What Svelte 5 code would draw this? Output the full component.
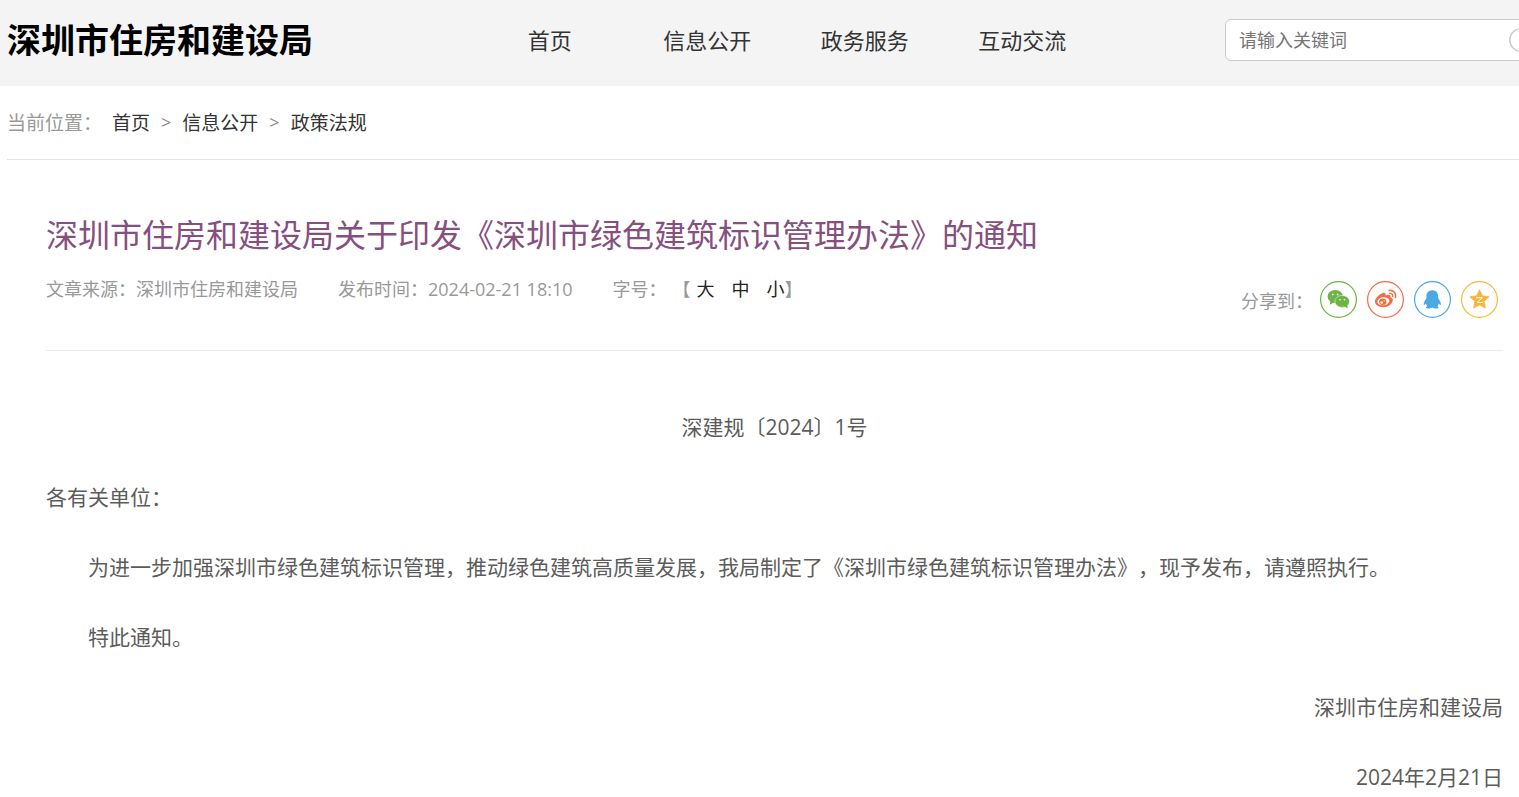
<script>
  const navItems = ['首页', '信息公开', '政务服务', '互动交流'];
  const crumbs = ['首页', '信息公开', '政策法规'];
  const sizes = ['大', '中', '小'];

  let keyword = $state('');
</script>

<div class="page">
  <header class="header">
    <a class="logo" href="#home">深圳市住房和建设局</a>

    <nav class="nav">
      {#each navItems as item}
        <a href="#nav">{item}</a>
      {/each}
    </nav>

    <form class="search" onsubmit={(e) => e.preventDefault()}>
      <input type="text" aria-label="请输入关键词" placeholder="请输入关键词" bind:value={keyword} />
      <button type="submit" aria-label="搜索">
        <svg width="30" height="30" viewBox="0 0 30 30" fill="none" stroke="#ccc" stroke-width="1.5">
          <circle cx="13" cy="15" r="11.2" />
          <path d="M21 23l6 6" />
        </svg>
      </button>
    </form>
  </header>

  <div class="crumbs">
    <span class="label">当前位置：</span>
    {#each crumbs as crumb, i}
      {#if i > 0}<span class="sep">&gt;</span>{/if}
      <a href="#crumb">{crumb}</a>
    {/each}
  </div>

  <main class="article">
    <h1>深圳市住房和建设局关于印发《深圳市绿色建筑标识管理办法》的通知</h1>

    <div class="info">
      <div class="meta">
        <span>文章来源：深圳市住房和建设局</span>
        <span>发布时间：2024-02-21 18:10</span>
        <span class="font-size">
          <span>字号：</span>
          <span class="sizes">
            <span>【</span>
            {#each sizes as size}
              <button type="button">{size}</button>
            {/each}
            <span>】</span>
          </span>
        </span>
      </div>

      <div class="share">
        <span>分享到：</span>
        <!-- wechat -->
        <a href="#wechat" aria-label="微信">
          <svg viewBox="0 0 37 37">
            <circle class="ring" cx="18.5" cy="18.5" r="17.9" stroke="#6cb544" />
            <g fill="#6cb544">
              <ellipse cx="15.2" cy="15.4" rx="7.6" ry="6.5" />
              <path d="M10.5 19.5l-.8 4.3 4.5-2.2z" />
            </g>
            <ellipse cx="22.2" cy="20.4" rx="7.3" ry="6" fill="#6cb544" stroke="#fff" stroke-width=".5" />
            <path d="M23.8 25l3.9 2.5-.6-4.2z" fill="#6cb544" />
            <g fill="#fff">
              <circle cx="12.8" cy="13.4" r=".9" />
              <circle cx="17.6" cy="13.4" r=".9" />
              <circle cx="20" cy="18.7" r=".8" />
              <circle cx="24.4" cy="18.7" r=".8" />
            </g>
          </svg>
        </a>
        <!-- weibo -->
        <a href="#weibo" aria-label="微博">
          <svg viewBox="0 0 37 37">
            <circle class="ring" cx="18.5" cy="18.5" r="17.9" stroke="#f56b45" />
            <path
              d="M15.8 12c1.8-.7 3.3 0 2.8 2.4 2.6-1.1 5.6-1 4.9 1.9 1.7.5 2.5 1.6 2.3 3.2-.4 3.7-4.8 6.7-9.6 6.7-4.7 0-8.2-2.4-8.2-5.7 0-3 3.8-7 7.8-8.5z"
              fill="#f56b45"
            />
            <ellipse cx="16.4" cy="20.3" rx="6" ry="4" fill="#fff" transform="rotate(-8 16.4 20.3)" />
            <ellipse cx="15.8" cy="20.7" rx="3.7" ry="3.3" fill="#f56b45" />
            <circle cx="14.7" cy="21.5" r="1.3" fill="#fff" />
            <circle cx="17.2" cy="19.8" r=".6" fill="#fff" />
            <g fill="none" stroke="#f56b45" stroke-linecap="round">
              <path d="M22.2 9.5c4-.7 7.3 2.6 6.3 6.7" stroke-width="1.6" />
              <path d="M22.6 12.4c2-.3 3.6 1.3 3.1 3.2" stroke-width="1.3" />
            </g>
          </svg>
        </a>
        <!-- qq -->
        <a href="#qq" aria-label="QQ">
          <svg viewBox="0 0 37 37">
            <circle class="ring" cx="18.5" cy="18.5" r="17.9" stroke="#4aa9e3" />
            <path
              d="M18.3 9.2c-3.8 0-5.9 2.8-5.9 6.2v1.8c-1.4 2-2.8 4.4-2.7 6.2.1 1.2 1.2.6 2.1-.8.3 1.1.8 1.9 1.5 2.6-1.9.8-1.6 2.3.8 2.3 1.8 0 3.2-.3 4.2-1 1 .7 2.4 1 4.2 1 2.4 0 2.7-1.5.8-2.3.7-.7 1.2-1.5 1.5-2.6.9 1.4 2 2 2.1.8.1-1.8-1.3-4.2-2.7-6.2v-1.8c0-3.4-2.1-6.2-5.9-6.2z"
              fill="#4aa9e3"
            />
          </svg>
        </a>
        <!-- qzone -->
        <a href="#qzone" aria-label="QQ空间">
          <svg viewBox="0 0 37 37">
            <circle class="ring" cx="18.5" cy="18.5" r="17.9" stroke="#f6b93b" />
            <path
              d="M18.5 8.7l2.9 6.1 6.7.9-4.9 4.7 1.2 6.7-5.9-3.2-5.9 3.2 1.2-6.7-4.9-4.7 6.7-.9z"
              fill="#f8b53c"
              stroke="#f8b53c"
              stroke-width=".7"
              stroke-linejoin="round"
            />
            <path d="M15 16.7h6.4l-5 4.5c2 .5 4 .4 6-.1" fill="none" stroke="#fff" stroke-width="1" />
          </svg>
        </a>
      </div>
    </div>

    <div class="content">
      <p class="center">深建规〔2024〕1号</p>
      <p>各有关单位：</p>
      <p class="indent">为进一步加强深圳市绿色建筑标识管理，推动绿色建筑高质量发展，我局制定了《深圳市绿色建筑标识管理办法》，现予发布，请遵照执行。</p>
      <p class="indent">特此通知。</p>
      <p class="right">深圳市住房和建设局</p>
      <p class="right">2024年2月21日</p>
    </div>
  </main>
</div>

<style>
  :global(body) {
    margin: 0;
    background: #fff;
  }
  .page {
    overflow: hidden;
    font-family: 'Open Sans', 'Noto Sans CJK SC', sans-serif;
    font-size: 18px;
    color: #333;
    /* keep full-width punctuation at its full width */
    text-spacing-trim: space-all;
  }
  a {
    color: inherit;
    text-decoration: none;
  }
  button,
  input {
    padding: 0;
    border: none;
    background: none;
    font: inherit;
    color: inherit;
  }
  button {
    cursor: pointer;
  }

  /* header */
  .header {
    display: grid;
    grid-template-columns: 464px 630px 1fr;
    align-items: center;
    height: 86px;
    box-sizing: border-box;
    padding: 0 0 6px 7px;
    background: #f4f4f4;
  }
  .logo {
    font-size: 34px;
    line-height: 48px;
    font-weight: bold;
    color: #000;
  }
  .nav {
    display: grid;
    grid-template-columns: repeat(4, 1fr);
    font-size: 22px;
    line-height: 32px;
    text-align: center;
  }
  /* the search box runs past the right edge of the window */
  .search {
    display: flex;
    align-items: center;
    justify-self: end;
    width: 314px;
    height: 42px;
    margin-right: -20px;
    box-sizing: border-box;
    border: 1px solid #ccc;
    border-radius: 6px;
    background: #fff;
  }
  .search input {
    flex: 1;
    min-width: 0;
    height: 40px;
    padding-left: 13px;
    outline: none;
  }
  .search input::placeholder {
    color: #757575;
    opacity: 1;
  }
  .search button {
    display: flex;
  }

  /* breadcrumb */
  .crumbs {
    display: flex;
    align-items: center;
    height: 71px;
    margin-left: 7px;
    padding-bottom: 2px;
    border-bottom: 1px solid #e2e2e2;
    font-size: 19px;
  }
  .crumbs .label {
    margin-right: 10px;
    color: #999;
  }
  .crumbs .sep {
    margin: 0 11px;
    font-size: 18px;
    color: #888;
  }

  /* article */
  .article {
    padding: 47px 16px 0 46px;
  }
  h1 {
    margin: 0;
    font-size: 32px;
    line-height: 56px;
    font-weight: normal;
    color: #864f80;
  }
  .info {
    display: flex;
    justify-content: space-between;
    height: 87px;
    border-bottom: 1px solid #ebebeb;
    color: #999;
  }
  .meta {
    display: flex;
    gap: 40px;
    padding-top: 12px;
    line-height: 28px;
    align-items: flex-start;
  }
  .font-size {
    display: flex;
    gap: 6px;
  }
  .sizes {
    display: flex;
  }
  .sizes button {
    margin: 0 0 0 6px;
    line-height: 28px;
    color: #222;
  }
  .sizes button + button {
    margin-left: 17px;
  }
  .share {
    display: flex;
    align-items: center;
    gap: 10px;
    height: 37px;
    padding: 18px 5px 0 0;
  }
  .share > span {
    margin-right: -3px;
  }
  .share a,
  .share svg {
    display: block;
    width: 37px;
    height: 37px;
  }
  .ring {
    fill: #fff;
    stroke-width: 1.2;
  }
  .content {
    padding-top: 55px;
    font-size: 21px;
    line-height: 42px;
    color: #5c5c5c;
  }
  .content p {
    margin: 0 0 28px;
  }
  .content p:last-child {
    margin: 0;
  }
  .center {
    text-align: center;
  }
  .indent {
    text-indent: 2em;
  }
  .right {
    text-align: right;
  }
</style>
